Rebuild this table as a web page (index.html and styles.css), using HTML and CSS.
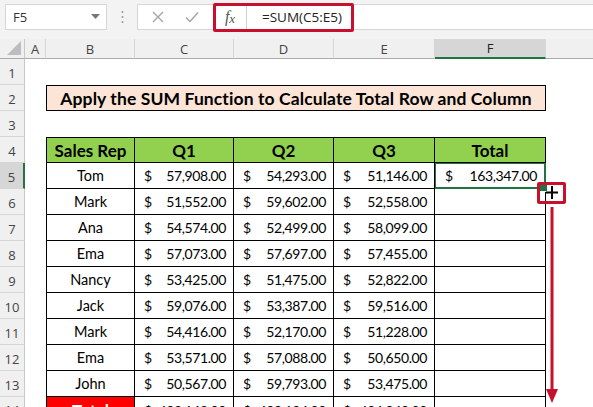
FILE: index.html
```html
<!DOCTYPE html>
<html>
<head>
<meta charset="utf-8">
<link rel="stylesheet" href="styles.css">
</head>
<body>
<div class="page">
  <div class="toolbar">
    <div class="namebox">
      <span>F5</span>
      <svg class="dd" width="9" height="5" viewBox="0 0 9 5"><polygon points="0,0 9,0 4.5,5" fill="#777"/></svg>
    </div>
    <div class="dots">
      <svg width="3" height="14" viewBox="0 0 3 14"><circle cx="1.5" cy="2" r="1" fill="#999"/><circle cx="1.5" cy="7" r="1" fill="#999"/><circle cx="1.5" cy="12" r="1" fill="#999"/></svg>
    </div>
    <div class="fbar">
      <div class="btns">
        <svg width="12" height="12" viewBox="0 0 12 12"><path d="M1 1 L11 11 M11 1 L1 11" stroke="#a6a6a6" stroke-width="1.4" fill="none"/></svg>
        <svg width="14" height="12" viewBox="0 0 14 12"><path d="M1 6.5 L5 10.5 L13 1.5" stroke="#a6a6a6" stroke-width="1.5" fill="none"/></svg>
      </div>
      <div class="fx"><i>f</i><i class="x">x</i></div>
      <div class="formula">=SUM(C5:E5)</div>
    </div>
  </div>

  <div class="sheet">
    <div class="corner"><svg width="14" height="14" viewBox="0 0 14 14"><polygon points="14,0 14,14 0,14" fill="#bdbdbd"/></svg></div>
    <div class="ch">A</div>
    <div class="ch">B</div>
    <div class="ch">C</div>
    <div class="ch">D</div>
    <div class="ch">E</div>
    <div class="ch ch-sel">F</div>
    <div class="ch ch-last"></div>

    <div class="rh">1</div><div class="blank span7"></div>

    <div class="rh">2</div><div class="blank"></div>
    <div class="title">Apply the SUM Function to Calculate Total Row and Column</div>
    <div class="blank"></div>

    <div class="rh">3</div><div class="blank span7"></div>

    <div class="rh">4</div><div class="blank"></div>
    <div class="c head first">Sales Rep</div>
    <div class="c head">Q1</div>
    <div class="c head">Q2</div>
    <div class="c head">Q3</div>
    <div class="c head">Total</div>
    <div class="blank"></div>

    <div class="rh rh-sel">5</div><div class="blank"></div>
    <div class="c name first">Tom</div>
    <div class="c cur"><span>$</span><span>57,908.00</span></div>
    <div class="c cur"><span>$</span><span>54,293.00</span></div>
    <div class="c cur"><span>$</span><span>51,146.00</span></div>
    <div class="c cur sel"><span>$</span><span>163,347.00</span></div>
    <div class="blank"></div>

    <div class="rh">6</div><div class="blank"></div>
    <div class="c name first">Mark</div>
    <div class="c cur"><span>$</span><span>51,552.00</span></div>
    <div class="c cur"><span>$</span><span>59,602.00</span></div>
    <div class="c cur"><span>$</span><span>52,558.00</span></div>
    <div class="c"></div>
    <div class="blank"></div>

    <div class="rh">7</div><div class="blank"></div>
    <div class="c name first">Ana</div>
    <div class="c cur"><span>$</span><span>54,574.00</span></div>
    <div class="c cur"><span>$</span><span>52,499.00</span></div>
    <div class="c cur"><span>$</span><span>58,099.00</span></div>
    <div class="c"></div>
    <div class="blank"></div>

    <div class="rh">8</div><div class="blank"></div>
    <div class="c name first">Ema</div>
    <div class="c cur"><span>$</span><span>57,073.00</span></div>
    <div class="c cur"><span>$</span><span>57,697.00</span></div>
    <div class="c cur"><span>$</span><span>57,455.00</span></div>
    <div class="c"></div>
    <div class="blank"></div>

    <div class="rh">9</div><div class="blank"></div>
    <div class="c name first">Nancy</div>
    <div class="c cur"><span>$</span><span>53,425.00</span></div>
    <div class="c cur"><span>$</span><span>51,475.00</span></div>
    <div class="c cur"><span>$</span><span>52,822.00</span></div>
    <div class="c"></div>
    <div class="blank"></div>

    <div class="rh">10</div><div class="blank"></div>
    <div class="c name first">Jack</div>
    <div class="c cur"><span>$</span><span>59,076.00</span></div>
    <div class="c cur"><span>$</span><span>53,387.00</span></div>
    <div class="c cur"><span>$</span><span>59,516.00</span></div>
    <div class="c"></div>
    <div class="blank"></div>

    <div class="rh">11</div><div class="blank"></div>
    <div class="c name first">Mark</div>
    <div class="c cur"><span>$</span><span>54,416.00</span></div>
    <div class="c cur"><span>$</span><span>52,170.00</span></div>
    <div class="c cur"><span>$</span><span>51,228.00</span></div>
    <div class="c"></div>
    <div class="blank"></div>

    <div class="rh">12</div><div class="blank"></div>
    <div class="c name first">Ema</div>
    <div class="c cur"><span>$</span><span>53,571.00</span></div>
    <div class="c cur"><span>$</span><span>57,088.00</span></div>
    <div class="c cur"><span>$</span><span>50,650.00</span></div>
    <div class="c"></div>
    <div class="blank"></div>

    <div class="rh">13</div><div class="blank"></div>
    <div class="c name first">John</div>
    <div class="c cur"><span>$</span><span>50,567.00</span></div>
    <div class="c cur"><span>$</span><span>59,793.00</span></div>
    <div class="c cur"><span>$</span><span>53,475.00</span></div>
    <div class="c"></div>
    <div class="blank"></div>

    <div class="rh rh-cut">14</div><div class="blank"></div>
    <div class="c total first">Total</div>
    <div class="c cur cut"><span>$</span><span>492,162.00</span></div>
    <div class="c cur cut"><span>$</span><span>498,104.00</span></div>
    <div class="c cur cut"><span>$</span><span>486,949.00</span></div>
    <div class="c"></div>
    <div class="blank"></div>
  </div>

  <div class="mark-formula"></div>
  <div class="mark-handle">
    <svg width="16" height="16" viewBox="0 0 16 16"><path d="M7 1 V14 M1 7.5 H13" stroke="#000" stroke-width="2" fill="none"/></svg>
  </div>
  <svg class="mark-arrow" width="12" height="200" viewBox="0 0 12 200"><rect x="4.5" y="0" width="3" height="186" fill="#c8102e"/><polygon points="0,182 12,182 6,196" fill="#c8102e"/></svg>
</div>
</body>
</html>
```

FILE: styles.css
```css
* { box-sizing: border-box; }
html, body { margin: 0; padding: 0; }
body { width: 593px; height: 407px; overflow: hidden; background: #fff; }
.page { position: relative; width: 593px; height: 407px; overflow: hidden; }

.toolbar {
  height: 39px;
  background: #f3f3f3;
  display: flex;
  align-items: flex-start;
  padding: 4px 0 0 5px;
  font-family: "Open Sans", "Noto Sans", sans-serif;
  font-size: 13px;
  color: #333;
}
.namebox {
  width: 102px; height: 26px;
  background: #fff;
  border: 1px solid #d6d6d6;
  display: flex; align-items: center; justify-content: space-between;
  padding: 0 6px 0 7px;
}
.namebox .dd { margin-top: -2px; }
.dots { width: 30px; height: 26px; display: flex; align-items: center; justify-content: center; }
.fbar { flex: 1; height: 26px; display: flex; background: #fff; border: 1px solid #d6d6d6; border-right: none; }
.btns { width: 76px; display: flex; align-items: center; justify-content: space-around; padding: 0 4px 0 4px; border-right: 1px solid #e3e3e3; }
.fx { width: 33px; display: flex; align-items: center; justify-content: center; border-right: 1px solid #d0d0d0; font-family: "Liberation Serif", serif; font-size: 16px; color: #555; }
.fx .x { font-size: 13px; margin-top: 3px; }
.formula { flex: 1; display: flex; align-items: center; padding-left: 15px; color: #222; font-size: 13.5px; }

.sheet {
  display: grid;
  grid-template-columns: 25px 21px 89px 99px 100px 101px 111px 1fr;
  grid-template-rows: 20px repeat(14, 26px);
  font-family: "Lato", "Open Sans", sans-serif;
}
.corner { background: #f0f0f0; border-right: 1px solid #c8c8c8; border-bottom: 1px solid #ababab; display: flex; align-items: flex-end; justify-content: flex-end; padding: 0 3px 3px 0; }
.ch {
  background: #f0f0f0; border-right: 1px solid #d6d6d6; border-bottom: 1px solid #ababab;
  display: flex; align-items: center; justify-content: center;
  font-family: "Open Sans", "Noto Sans", sans-serif; font-size: 13px; color: #444;
}
.ch-sel { background: #d6d6d6; border-bottom: 2px solid #217346; color: #222; }
.ch-last { border-right: none; }
.rh {
  background: #f0f0f0; border-right: 1px solid #c8c8c8; border-bottom: 1px solid #d6d6d6;
  display: flex; align-items: center; justify-content: center;
  font-family: "Open Sans", "Noto Sans", sans-serif; font-size: 13px; color: #444; padding-top: 2px;
}
.rh-sel { background: #d6d6d6; border-right: 2px solid #217346; }
.rh-cut { align-items: flex-start; padding-top: 4px; }
.blank { background: #fff; }
.span7 { grid-column: span 7; }

.title {
  grid-column: span 5;
  background: #fce4d6; border: 1px solid #000;
  display: flex; align-items: center; justify-content: center;
  font-weight: 700; font-size: 17.5px; color: #000; letter-spacing: 0.1px;
}
.c { border-right: 1px solid #000; border-bottom: 1px solid #000; display: flex; align-items: center; font-size: 14.5px; color: #000; }
.first { border-left: 1px solid #000; }
.head { background: #92d050; border-top: 1px solid #000; justify-content: center; font-weight: 700; font-size: 17px; }
.name { justify-content: center; }
.cur { justify-content: space-between; padding: 0 7px 0 9px; font-size: 14px; letter-spacing: -0.4px; }
.cut { align-items: flex-start; padding-top: 5px; }
.total { background: #ff0000; color: #fff; font-weight: 700; font-size: 17px; justify-content: center; align-items: flex-start; padding-top: 3px; }
.sel { position: relative; border: 2px solid #217346; border-top-width: 1px; border-left-width: 1px; }
.sel::after {
  content: ""; position: absolute; right: -4px; bottom: -5px;
  width: 7px; height: 7px; background: #217346; border: 1px solid #fff;
}

.mark-formula { position: absolute; left: 213px; top: 3px; width: 141px; height: 29px; border: 3px solid #c8102e; border-radius: 2px; }
.mark-handle { position: absolute; left: 537px; top: 182px; width: 29px; height: 22px; border: 3px solid #c8102e; border-radius: 2px; display: flex; align-items: center; justify-content: center; padding-left: 2px; }
.mark-arrow { position: absolute; left: 546px; top: 207px; }
```
